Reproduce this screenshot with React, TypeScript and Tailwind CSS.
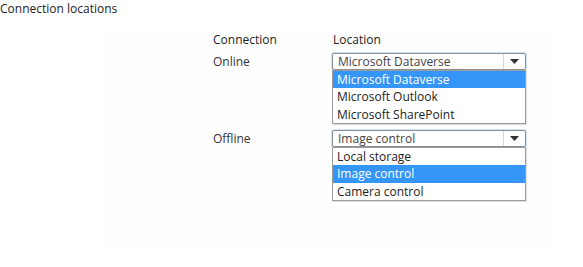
import React from 'react';

type DropProps = {
  value: string;
  options: string[];
};

function Arrow() {
  return (
    <svg width="9" height="5" viewBox="0 0 9 5" className="block">
      <path d="M0 0 H9 L4.5 5 Z" fill="#333" />
    </svg>
  );
}

function OpenSelect({ value, options }: DropProps) {
  return (
    <div className="w-[194px]">
      {/* closed box */}
      <div className="flex h-[17px] border border-[#8a8f98] rounded-[2px] bg-white shadow-[0_0_0_1px_#cfe0f5]">
        <div className="flex-1 pl-[5px] text-[12px] leading-[15px] text-[#444] truncate">{value}</div>
        <div className="w-[22px] flex items-center justify-center border-l border-[#d8d8d8]">
          <Arrow />
        </div>
      </div>
      {/* list */}
      <div className="border border-[#9b9b9b] bg-white shadow-[1px_1px_1px_rgba(0,0,0,0.12)]">
        {options.map((o, i) => (
          <div
            key={o}
            className={
              (i === 1 ? 'h-[18px] leading-[18px] ' : 'h-[17px] leading-[17px] ') +
              (o === value
                ? 'pl-[4px] text-[12px] bg-[#3396f8] text-white'
                : 'pl-[4px] text-[12px] text-[#222]')
            }
          >
            {o}
          </div>
        ))}
      </div>
    </div>
  );
}

export default function App() {
  return (
    <div
      className="w-[583px] h-[267px] bg-white overflow-hidden"
      style={{ fontFamily: '"Open Sans", "Noto Sans", sans-serif' }}
    >
      <div className="pt-[1px] text-[12px] leading-[16px] text-[#222]">Connection locations</div>

      <div className="ml-[103px] mt-[14px] w-[450px] h-[221px] bg-[#fefefe]">
        <div className="ml-[110px] pt-[1px] grid grid-cols-[119px_194px] text-[12px] text-[#222]">
          <div className="leading-[16px]">Connection</div>
          <div className="leading-[16px] pl-[1px]">Location</div>

          <div className="mt-[5px] leading-[17px] text-[#333]">Online</div>
          <div className="mt-[5px]">
            <OpenSelect
              value="Microsoft Dataverse"
              options={['Microsoft Dataverse', 'Microsoft Outlook', 'Microsoft SharePoint']}
            />
          </div>

          <div className="mt-[6px] leading-[17px] text-[#333]">Offline</div>
          <div className="mt-[6px]">
            <OpenSelect value="Image control" options={['Local storage', 'Image control', 'Camera control']} />
          </div>
        </div>
      </div>
    </div>
  );
}
